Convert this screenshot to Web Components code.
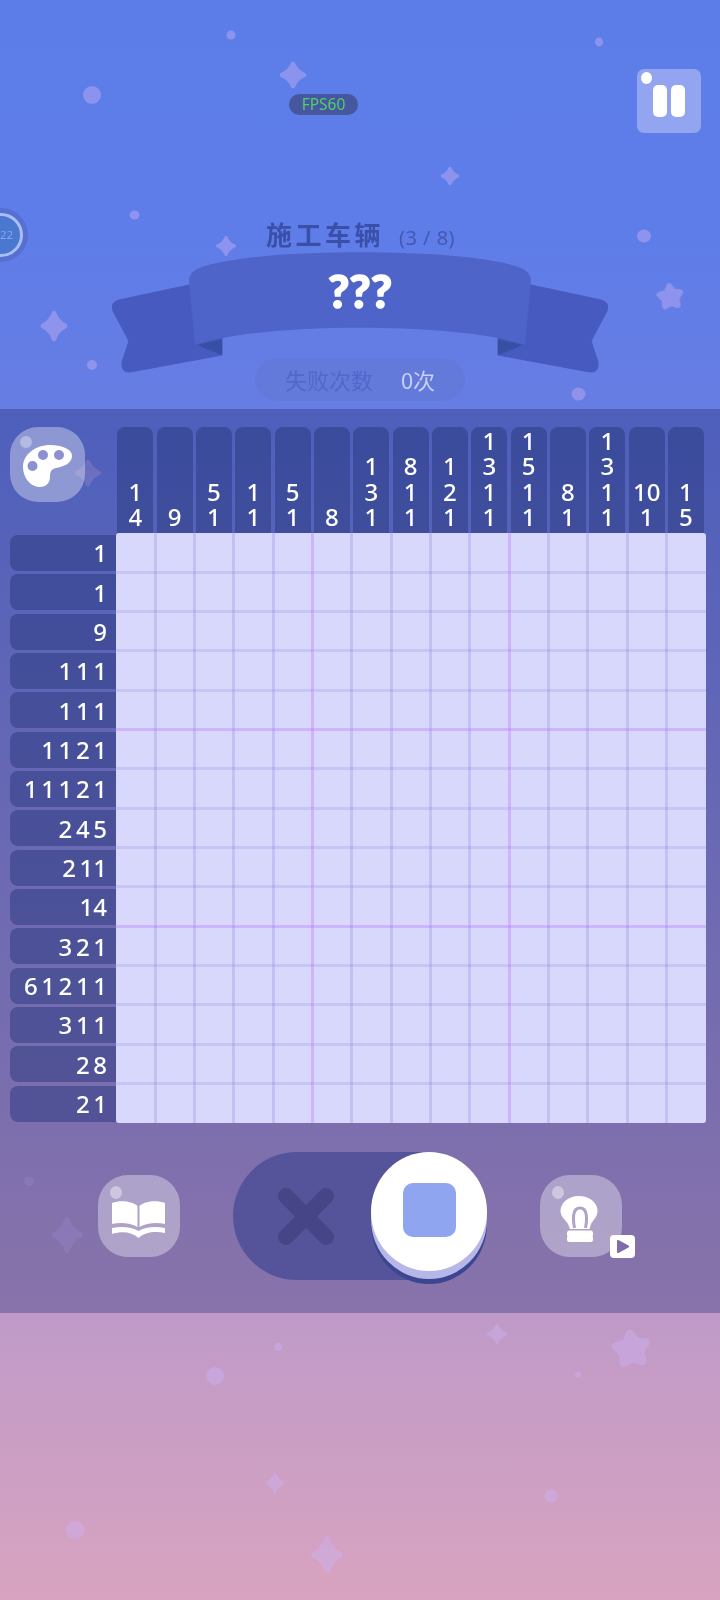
<!DOCTYPE html>
<html lang="zh">
<head>
<meta charset="utf-8">
<title>Nonogram</title>
<style>
  html, body { margin: 0; padding: 0; }
  body { font-family: "Noto Sans", "Noto Sans CJK SC", sans-serif; }
</style>
</head>
<body>
<game-screen>
  <game-header></game-header>
  <game-panel></game-panel>
</game-screen>

<script>
const SPARKLE = 'M50 8C58 28 72 42 92 50C72 58 58 72 50 92C42 72 28 58 8 50C28 42 42 28 50 8Z';
const STAR = 'M47 14L62 34L87 36L74 58L78 83L54 76L32 88L30 63L12 46L37 38Z';

// x, y are the centre of the shape, w and h its size
const DECOR = [
  ['c', 92, 95, 18, 18], ['c', 231, 35, 9, 9], ['c', 599, 42, 8, 9], ['c', 134.5, 215, 10, 9],
  ['c', 644, 236, 14, 13], ['c', 92, 365, 10, 10], ['c', 578.5, 394, 14, 13],
  ['s', 293, 75, 27, 27], ['s', 450, 176, 19, 19], ['s', 226, 246, 20, 20], ['s', 54, 326, 27, 31],
  ['t', 670, 296, 28, 28],
  ['s', 88, 473, 26, 27], ['c', 29, 1181, 10, 9], ['s', 67, 1235, 31, 36],
  ['s', 497, 1334, 20, 20], ['t', 631, 1348, 40, 40], ['c', 278, 1347, 8, 8], ['c', 215, 1376, 18, 18],
  ['c', 578, 1375, 6, 6], ['s', 275, 1483, 19, 20], ['c', 551, 1496, 13, 13], ['c', 75, 1530, 19, 18],
  ['s', 327, 1555, 32, 37]
];

class GameScreen extends HTMLElement {
  connectedCallback() {
    this.attachShadow({ mode: 'open' });
    const shapes = DECOR.map(([kind, x, y, w, h]) => {
      if (kind === 'c') return `<ellipse cx="${x}" cy="${y}" rx="${w / 2}" ry="${h / 2}"/>`;
      const d = kind === 's' ? SPARKLE : STAR;
      const sw = kind === 's' ? 16 : 20;
      return `<svg x="${x - w / 2}" y="${y - h / 2}" width="${w}" height="${h}" viewBox="0 0 100 100" preserveAspectRatio="none"><path d="${d}" stroke="rgb(205,180,245)" stroke-width="${sw}" stroke-linejoin="round"/></svg>`;
    }).join('');
    this.shadowRoot.innerHTML = `
      <style>
        :host {
          display: block;
          position: relative;
          width: 720px;
          height: 1600px;
          overflow: hidden;
          background: linear-gradient(180deg, #5c7de8 0%, #5f7de8 15%, #677de3 26%, #bf9ac8 82%, #d8a3c0 100%);
        }
        .decor { position: absolute; left: 0; top: 0; }
        .decor g { fill: rgb(205,180,245); opacity: .42; }
        .content { position: relative; }
      </style>
      <svg class="decor" width="720" height="1600"><g>${shapes}</g></svg>
      <div class="content"><slot></slot></div>
    `;
  }
}

class GameHeader extends HTMLElement {
  connectedCallback() {
    this.attachShadow({ mode: 'open' });
    this.shadowRoot.innerHTML = `
      <style>
        :host {
          display: flex;
          flex-direction: column;
          align-items: center;
          position: relative;
          height: 409px;
          box-sizing: border-box;
          padding-top: 69px;
        }
        .top {
          align-self: stretch;
          display: flex;
          justify-content: flex-end;
          padding-right: 19px;
        }
        .pause {
          position: relative;
          display: flex;
          gap: 4px;
          justify-content: center;
          align-items: center;
          width: 64px;
          height: 64px;
          border-radius: 7px;
          background: #93a5f0;
        }
        .pause i { display: block; width: 14px; height: 32px; border-radius: 5px; background: #fff; }
        .pause b { position: absolute; left: 4px; top: 3px; width: 11px; height: 12px; border-radius: 50%; background: #fff; }
        .fps {
          position: absolute;
          left: 289px;
          top: 94px;
          width: 69px;
          height: 21px;
          border-radius: 11px;
          background: #46569f;
          color: #4fce6c;
          font: 400 15.5px/21px "Noto Sans", sans-serif;
          text-align: center;
        }
        .timer {
          position: absolute;
          left: -26px;
          top: 208px;
          width: 54px;
          height: 54px;
          border-radius: 50%;
          background: #5570d0;
        }
        .timer span {
          position: absolute;
          left: 26px;
          top: 17px;
          color: #85a5e8;
          font: 400 11.5px/20px "Noto Sans", sans-serif;
        }
        .timer svg { position: absolute; left: 0; top: 0; }
        .title {
          margin-top: 86px;
          margin-left: 1px;
          height: 30px;
          display: flex;
          align-items: baseline;
          gap: 15px;
          color: #3a4fa8;
          font: 700 26px/30px "Noto Sans CJK SC", sans-serif;
          letter-spacing: 3.5px;
          white-space: nowrap;
        }
        .title small {
          font: 400 20px/30px "Noto Sans", sans-serif;
          letter-spacing: .5px;
          color: #4358b4;
        }
        .ribbon { position: relative; width: 720px; height: 126px; margin-top: -1px; }
        .ribbon svg { display: block; }
        .ribbon span {
          position: absolute;
          left: 0;
          right: 0;
          top: 19px;
          text-align: center;
          color: #fff;
          font: 900 46px/48px Lato, sans-serif;
          -webkit-text-stroke: 1.5px #fff;
        }
        .fails {
          margin-top: -16px;
          width: 210px;
          height: 43px;
          border-radius: 22px;
          background: #647adb;
          display: flex;
          align-items: center;
          justify-content: center;
          gap: 28px;
          font: 400 22px/43px "Noto Sans CJK SC", sans-serif;
          color: #5068ca;
          position: relative;
        }
        .fails em { font-style: normal; color: #c4d0f5; }
      </style>
      <div class="top">
        <div class="pause"><b></b><i></i><i></i></div>
      </div>
      <div class="fps">FPS60</div>
      <div class="timer">
        <svg width="54" height="54"><circle cx="27" cy="27" r="20.5" fill="#4a78d0" stroke="#a9bdf6" stroke-width="3"/></svg>
        <span>22</span>
      </div>
      <div class="title">施工车辆<small>(3 / 8)</small></div>
      <div class="ribbon">
        <svg width="720" height="126" viewBox="0 248 720 126">
          <path d="M189 285L119 300Q110 302 113 311L128 339Q129 341 128 344L122 362Q121 373 130 372L222 355V320Z" fill="#475abf" stroke="#475abf" stroke-width="1" stroke-linejoin="round"/>
          <path d="M531 285L601 300Q610 302 607 311L592 339Q591 341 592 344L598 362Q599 373 590 372L498 355V320Z" fill="#475abf" stroke="#475abf" stroke-width="1" stroke-linejoin="round"/>
          <path d="M197 345L222 339V355Z" fill="#3750a4"/>
          <path d="M523 345L498 339V355Z" fill="#3750a4"/>
          <path d="M189 281Q189 272 199 268C250 247 470 247 521 268Q531 272 531 281L525 345C460 322 260 322 195 345Z" fill="#4f64c8"/>
        </svg>
        <span>???</span>
      </div>
      <div class="fails"><span>失败次数</span><em>0次</em></div>
    `;
  }
}

class NonoBoard extends HTMLElement {
  connectedCallback() {
    const cols = ['1 4', '9', '5 1', '1 1', '5 1', '8', '1 3 1', '8 1 1', '1 2 1', '1 3 1 1', '1 5 1 1', '8 1', '1 3 1 1', '10 1', '1 5'];
    const rows = ['1', '1', '9', '1 1 1', '1 1 1', '1 1 2 1', '1 1 1 2 1', '2 4 5', '2 11', '14', '3 2 1', '6 1 2 1 1', '3 1 1', '2 8', '2 1'];
    const spans = clue => clue.split(' ').map(n => `<span>${n}</span>`).join('');
    let cells = '';
    for (let r = 0; r < 15; r++) {
      for (let c = 0; c < 15; c++) {
        let cls = 'cell';
        if (c === 4 || c === 9) cls += ' v5';
        if (r === 4 || r === 9) cls += ' h5';
        if (c === 14) cls += ' last-c';
        if (r === 14) cls += ' last-r';
        cells += `<div class="${cls}"></div>`;
      }
    }
    this.attachShadow({ mode: 'open' });
    this.shadowRoot.innerHTML = `
      <style>
        :host {
          display: grid;
          grid-template-columns: 116px 590px;
          grid-template-rows: 106px 590px;
          color: #fff;
          font: 500 24px/25.6px "Noto Sans", sans-serif;
        }
        .palette { padding-left: 9.5px; }
        .palette-btn {
          position: relative;
          width: 75px;
          height: 75px;
          border-radius: 28px;
          background: rgba(255,255,255,.35);
        }
        .palette-btn svg { display: block; }
        .cols { display: grid; grid-template-columns: repeat(15, 1fr); }
        .col {
          margin: 0 2px 0 1.33px;
          background: rgba(41,56,126,.5);
          border-radius: 8px 8px 0 0;
          display: flex;
          flex-direction: column;
          justify-content: flex-end;
          align-items: center;
          padding-bottom: 3px;
        }
        .rows { display: grid; grid-template-rows: repeat(15, 1fr); padding-left: 9.5px; }
        .row {
          margin: 2px 0 1.33px;
          background: rgba(41,56,126,.5);
          border-radius: 8px 0 0 8px;
          display: flex;
          justify-content: flex-end;
          align-items: center;
          gap: 3.6px;
          padding-right: 9px;
        }
        .grid {
          display: grid;
          grid-template-columns: repeat(15, 1fr);
          grid-template-rows: repeat(15, 1fr);
          background: #d8d7fc;
          border-radius: 3px;
          overflow: hidden;
        }
        .cell { position: relative; }
        .cell::before, .cell::after {
          content: '';
          position: absolute;
        }
        .cell::before { top: 0; bottom: 0; right: -1.5px; width: 3px; background: rgba(110,105,215,.2); }
        .cell::after { left: 0; right: 0; bottom: -1.5px; height: 3px; background: rgba(110,105,215,.16); }
        .cell.v5::before { background: rgba(190,130,250,.42); }
        .cell.h5::after { background: rgba(190,130,250,.42); }
        .cell.last-c::before, .cell.last-r::after { display: none; }
      </style>
      <div class="palette">
        <div class="palette-btn">
          <svg width="75" height="75">
            <circle cx="16" cy="15" r="6" fill="#fff" opacity=".35"/>
            <path d="M13 40C13 27 26 18 40 18C52 18 62 22 62 29C62 37 52 40 46 41C41 42 40 45 40 50C40 56 36 60 30 60C20 60 13 50 13 40Z" fill="#fff"/>
            <circle cx="33" cy="28" r="5" fill="#8c90cf"/>
            <circle cx="49" cy="28" r="5" fill="#8c90cf"/>
            <circle cx="22.5" cy="39" r="5" fill="#8c90cf"/>
          </svg>
        </div>
      </div>
      <div class="cols">${cols.map(c => `<div class="col">${spans(c)}</div>`).join('')}</div>
      <div class="rows">${rows.map(r => `<div class="row">${spans(r)}</div>`).join('')}</div>
      <div class="grid">${cells}</div>
    `;
  }
}

class GlassButton extends HTMLElement {
  connectedCallback() {
    this.attachShadow({ mode: 'open' });
    this.shadowRoot.innerHTML = `
      <style>
        :host {
          display: block;
          position: relative;
          flex: none;
          width: 82px;
          height: 82px;
          border-radius: 30px;
          background: rgba(255,255,255,.35);
        }
        ::slotted(svg) { display: block; }
        .dot { position: absolute; left: 12px; top: 11px; width: 12px; height: 13px; border-radius: 50%; background: rgba(255,255,255,.4); }
      </style>
      <div class="dot"></div>
      <slot></slot>
    `;
  }
}

class ModeToggle extends HTMLElement {
  connectedCallback() {
    this.attachShadow({ mode: 'open' });
    this.shadowRoot.innerHTML = `
      <style>
        :host {
          display: flex;
          align-items: center;
          position: relative;
          flex: none;
          box-sizing: border-box;
          width: 254px;
          height: 128px;
          padding-left: 45px;
          border-radius: 64px;
          background: #55549a;
        }
        svg { display: block; }
        .knob {
          position: absolute;
          right: 0;
          top: 0;
          width: 116px;
          height: 119px;
          border-radius: 50%;
          background: #fff;
          box-shadow: 0 8px 0 #b6b6e8, 0 13px 0 #3c4590;
          display: flex;
          align-items: center;
          justify-content: center;
        }
        .fill { width: 53px; height: 54px; margin-top: -3px; border-radius: 10px; background: #8fa5ef; }
      </style>
      <svg width="56" height="57" viewBox="0 0 56 57">
        <path d="M8 8L48 49M48 8L8 49" stroke="#464588" stroke-width="16" stroke-linecap="round"/>
      </svg>
      <div class="knob"><div class="fill"></div></div>
    `;
  }
}

class GamePanel extends HTMLElement {
  connectedCallback() {
    this.attachShadow({ mode: 'open' });
    this.shadowRoot.innerHTML = `
      <style>
        :host {
          display: block;
          box-sizing: border-box;
          height: 904px;
          padding-top: 18px;
          background: rgba(27,36,109,.33);
        }
        .tools {
          display: flex;
          align-items: center;
          gap: 53px;
          margin-top: 29px;
          padding-left: 98px;
        }
        .hint { position: relative; }
        .ad {
          position: absolute;
          left: 70px;
          top: 60px;
          width: 25px;
          height: 23px;
          border-radius: 4px;
          background: #fff;
          display: flex;
          align-items: center;
          justify-content: center;
        }
        .ad svg { display: block; }
      </style>
      <nono-board></nono-board>
      <div class="tools">
        <glass-button>
          <svg width="82" height="82">
            <path fill="#fff" d="M14 28C22 25 34 26 39.5 31V52C33 48 22 47 14 49Z"/>
            <path fill="#fff" d="M41.5 31C47 26 59 25 67 28V49C59 47 48 48 41.5 52Z"/>
            <path fill="#fff" d="M14 53C24 51 34 52 40.5 56C47 52 57 51 67 53V58C57 56 47 57 40.5 63C34 57 24 56 14 59Z"/>
          </svg>
        </glass-button>
        <mode-toggle></mode-toggle>
        <div class="hint">
          <glass-button>
            <svg width="82" height="82">
              <path fill="#fff" d="M39 21C50 21 57.5 28 57.5 36C57.5 42 53 45 51 49L49.5 54H30L28 49C26 45 20.5 42 20.5 36C20.5 28 28 21 39 21Z"/>
              <path fill="none" stroke="#b0a2c8" stroke-width="3" d="M34.5 53C33 45 32 33 40 33C48 33 47 45 45.5 53"/>
              <rect x="27" y="55.5" width="26" height="6.5" rx="2.5" fill="#fff"/>
              <rect x="27" y="60.5" width="26" height="6.5" rx="2.5" fill="#fff"/>
            </svg>
          </glass-button>
          <div class="ad"><svg width="14" height="15"><path d="M2 2L12 7.5L2 13Z" fill="#7f6ca8" stroke="#7f6ca8" stroke-width="2" stroke-linejoin="round"/></svg></div>
        </div>
      </div>
    `;
  }
}

customElements.define('game-screen', GameScreen);
customElements.define('game-header', GameHeader);
customElements.define('nono-board', NonoBoard);
customElements.define('glass-button', GlassButton);
customElements.define('mode-toggle', ModeToggle);
customElements.define('game-panel', GamePanel);
</script>
</body>
</html>
